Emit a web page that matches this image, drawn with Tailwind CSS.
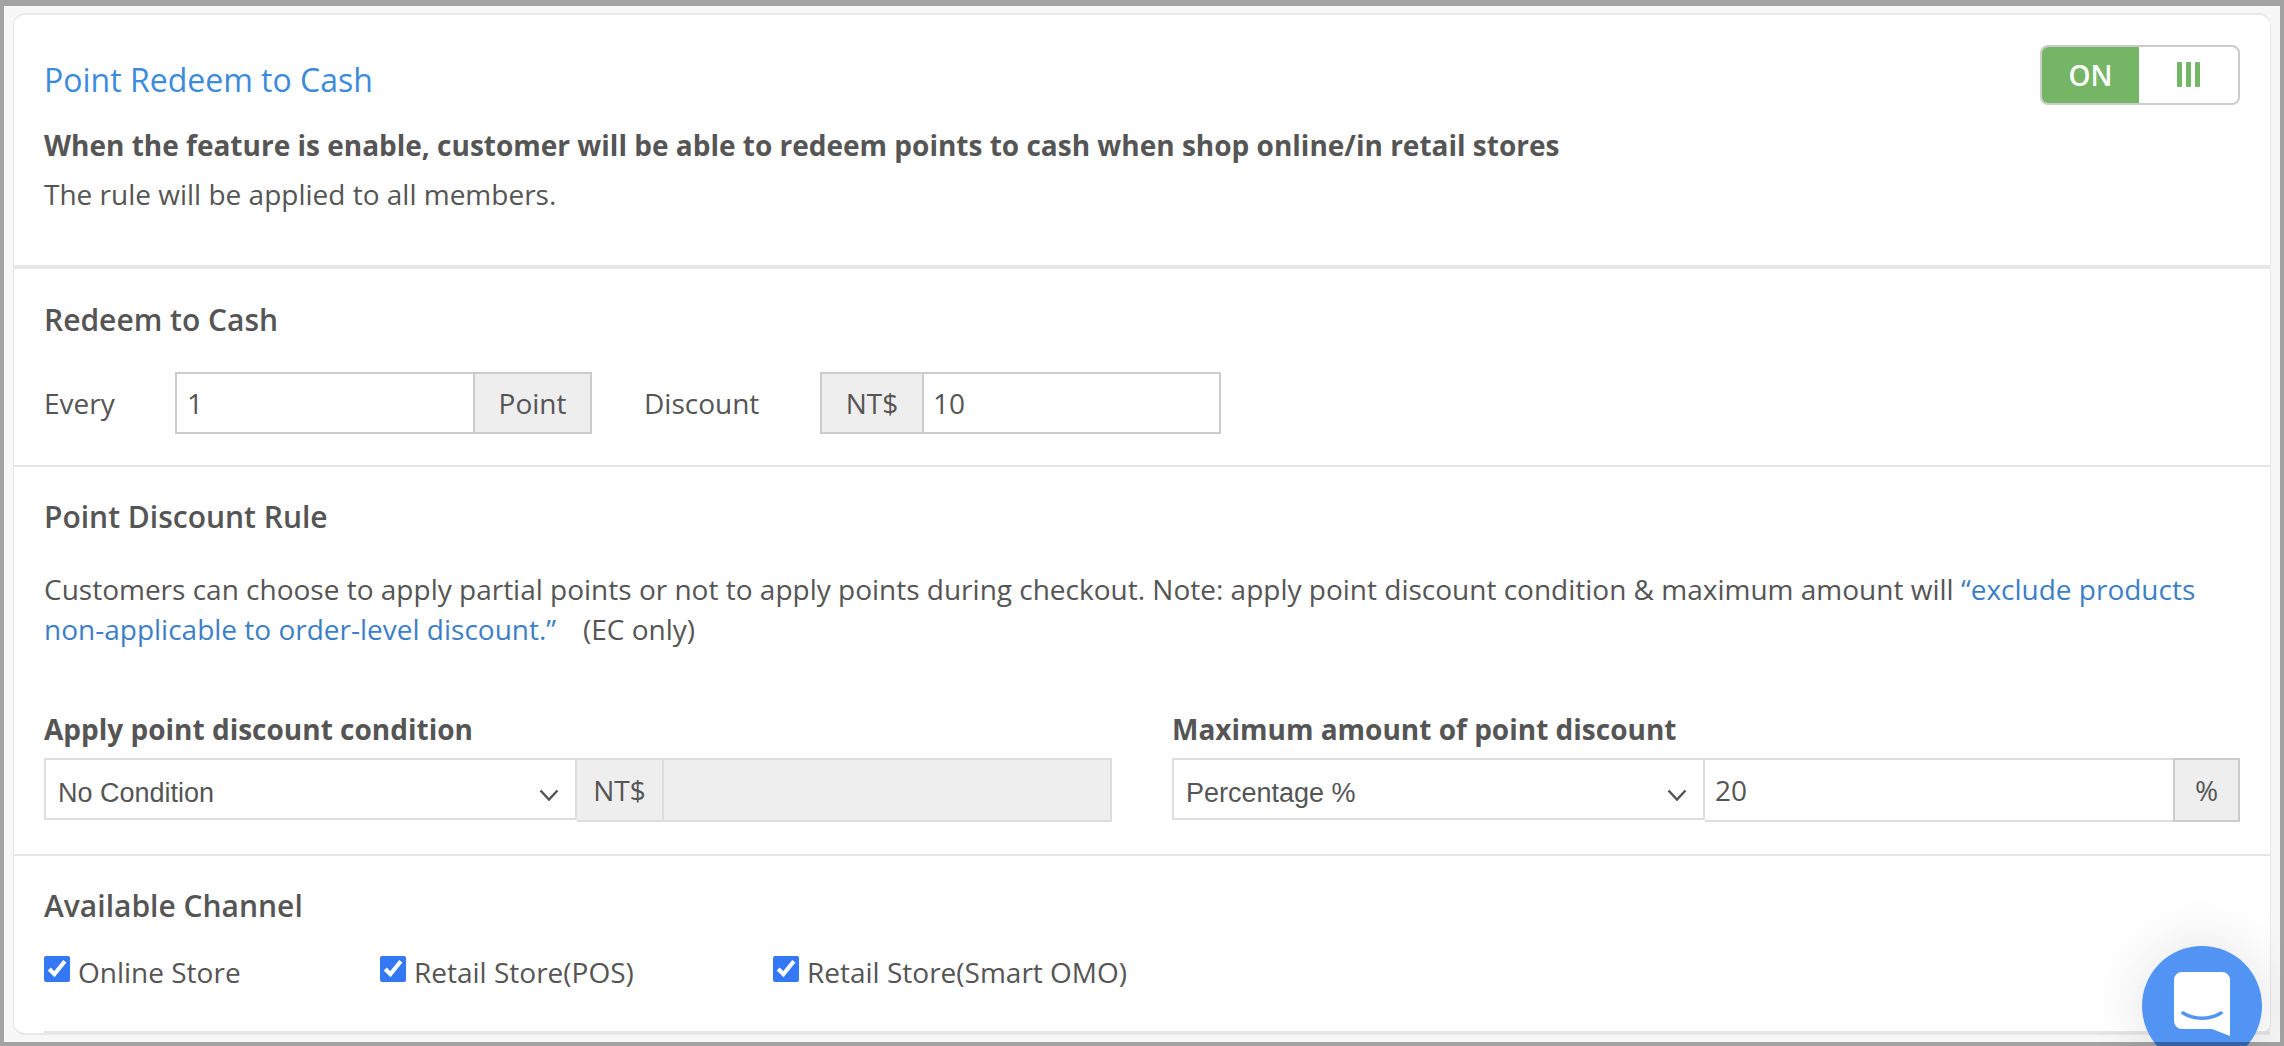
<!DOCTYPE html>
<html lang="en">
<head>
  <meta charset="UTF-8" />
  <title>Point Redeem to Cash</title>
  <script src="https://cdn.jsdelivr.net/npm/@tailwindcss/browser@4"></script>
</head>
<body class="bg-[#f7f7f7] h-screen overflow-hidden relative font-['Open_Sans',sans-serif] text-[#555] text-[28px]">
  <!-- card -->
  <div class="mt-[13px] ml-[13px] w-[2258px] h-[1022px] bg-white border-y-2 border-x border-[#e8e8e8] rounded-xl flex flex-col">
    <section class="h-[254px] px-[30px] border-b-4 border-[#e6e6e6] relative shrink-0 pt-[42px]">
      <h1 class="text-[32px] leading-[46px] text-[#3d8bdc]">Point Redeem to Cash</h1>
      <p class="font-bold leading-[40px] mt-[22px]">When the feature is enable, customer will be able to redeem points to cash when shop online/in retail stores</p>
      <p class="leading-[40px] mt-[9px]">The rule will be applied to all members.</p>
      <div class="absolute left-[2026px] top-[30px] w-[200px] h-[60px] border-2 border-[#ccc] rounded-lg overflow-hidden flex">
        <div class="w-[97px] bg-[#74b566] text-white font-semibold text-[28px] flex items-center justify-center">ON</div>
        <div class="flex-1 flex items-center justify-center gap-[4px] pb-px">
          <span class="w-[5px] h-[25px] bg-[#74b566] rounded-[1px]"></span>
          <span class="w-[5px] h-[25px] bg-[#74b566] rounded-[1px]"></span>
          <span class="w-[5px] h-[25px] bg-[#74b566] rounded-[1px]"></span>
        </div>
      </div>
    </section>

    <section class="h-[198px] px-[30px] border-b-2 border-[#e6e6e6] shrink-0 pt-[31px]">
      <h2 class="font-semibold text-[30px] leading-[40px]">Redeem to Cash</h2>
      <div class="flex items-center mt-[32px] h-[62px]">
        <span class="w-[131px]">Every</span>
        <div class="flex w-[417px] h-[62px] border-2 border-[#ccc]">
          <div class="flex-1 pl-[10px] flex items-center">1</div>
          <div class="w-[117px] border-l-2 border-[#ccc] bg-[#eee] flex items-center justify-center">Point</div>
        </div>
        <span class="ml-[52px] w-[176px]">Discount</span>
        <div class="flex w-[401px] h-[62px] border-2 border-[#ccc]">
          <div class="w-[102px] border-r-2 border-[#ccc] bg-[#eee] flex items-center justify-center">NT$</div>
          <div class="flex-1 pl-[9px] flex items-center">10</div>
        </div>
      </div>
    </section>

    <section class="h-[389px] px-[30px] border-b-2 border-[#e6e6e6] shrink-0 pt-[30px]">
      <h2 class="font-semibold text-[30px] leading-[40px]">Point Discount Rule</h2>
      <p class="leading-[40px] mt-[32px] w-[2200px]">Customers can choose to apply partial points or not to apply points during checkout. Note: apply point discount condition &amp; maximum amount will <a class="text-[#3d7fc7]">“exclude products</a><br /><a class="text-[#3d7fc7]">non-applicable to order-level discount.”</a> &nbsp;&nbsp;<span class="ml-[5px]">(EC only)</span></p>
      <div class="flex mt-[60px]">
        <div class="w-[1128px] shrink-0">
          <div class="font-bold leading-[40px]">Apply point discount condition</div>
          <div class="flex mt-[9px] items-start">
            <div class="relative w-[533px] h-[62px] border-2 border-[#ddd]">
              <select class="w-full h-full appearance-none pl-[12px] pt-[8px] font-['Liberation_Sans',sans-serif] text-[27px]"><option>No Condition</option></select>
              <svg class="absolute right-[16px] top-[29px] w-[20px] h-[12px]" viewBox="0 0 20 12" fill="none" stroke="#555" stroke-width="2.5"><path d="M1.5 1.5L10 10.5L18.5 1.5"/></svg>
            </div>
            <div class="flex w-[535px] h-[64px] border-2 border-[#ddd] bg-[#eee] border-l-0">
              <div class="w-[87px] border-r-2 border-[#ddd] flex items-center justify-center">NT$</div>
            </div>
          </div>
        </div>
        <div class="w-[1068px] shrink-0">
          <div class="font-bold leading-[40px]">Maximum amount of point discount</div>
          <div class="flex mt-[9px] items-start">
            <div class="relative w-[533px] h-[62px] border-2 border-[#ddd]">
              <select class="w-full h-full appearance-none pl-[12px] pt-[8px] font-['Liberation_Sans',sans-serif] text-[27px]"><option>Percentage %</option></select>
              <svg class="absolute right-[16px] top-[29px] w-[20px] h-[12px]" viewBox="0 0 20 12" fill="none" stroke="#555" stroke-width="2.5"><path d="M1.5 1.5L10 10.5L18.5 1.5"/></svg>
            </div>
            <div class="flex w-[535px] h-[64px] border-t-2 border-b-2 border-[#ddd]">
              <div class="flex-1 pl-[10px] flex items-center">20</div>
              <div class="w-[67px] bg-[#eee] border-2 border-[#ccc] -my-[2px] flex items-center justify-center">%</div>
            </div>
          </div>
        </div>
      </div>
    </section>

    <section class="flex-1 px-[30px] pt-[30px] relative">
      <h2 class="font-semibold text-[30px] leading-[40px]">Available Channel</h2>
      <div class="flex mt-[26px] h-[40px] items-center">
        <label class="flex items-center w-[336px]"><input type="checkbox" checked class="w-[26px] h-[26px] m-0 mr-[8px] accent-[#3478f6] -mt-[6px]" />Online Store</label>
        <label class="flex items-center w-[393px]"><input type="checkbox" checked class="w-[26px] h-[26px] m-0 mr-[8px] accent-[#3478f6] -mt-[6px]" />Retail Store(POS)</label>
        <label class="flex items-center"><input type="checkbox" checked class="w-[26px] h-[26px] m-0 mr-[8px] accent-[#3478f6] -mt-[6px]" />Retail Store(Smart OMO)</label>
      </div>
      <div class="absolute left-[30px] right-0 bottom-[-2px] h-[4px] bg-[#e6e6e6]"></div>
    </section>
  </div>

  <!-- chat launcher -->
  <div class="absolute left-[2142px] top-[946px] w-[120px] h-[120px] rounded-full bg-[#5294f4] shadow-[0_0_60px_rgba(0,0,0,0.12)] flex items-center justify-center">
    <svg class="w-[56px] h-[64px] mt-[-4px]" viewBox="0 0 56 64" fill="none">
      <path d="M8 0H48a8 8 0 0 1 8 8V64L38 57H8a8 8 0 0 1-8-8V8a8 8 0 0 1 8-8z" fill="#fff"/>
      <path d="M9 41c12 7 26 7 38 0" stroke="#5294f4" stroke-width="3.5" stroke-linecap="round"/>
    </svg>
  </div>

  <!-- dimmed frame of the window behind -->
  <div class="absolute inset-0 border-t-[6px] border-x-[4px] border-b-[4px] border-black/34 pointer-events-none"></div>
</body>
</html>
